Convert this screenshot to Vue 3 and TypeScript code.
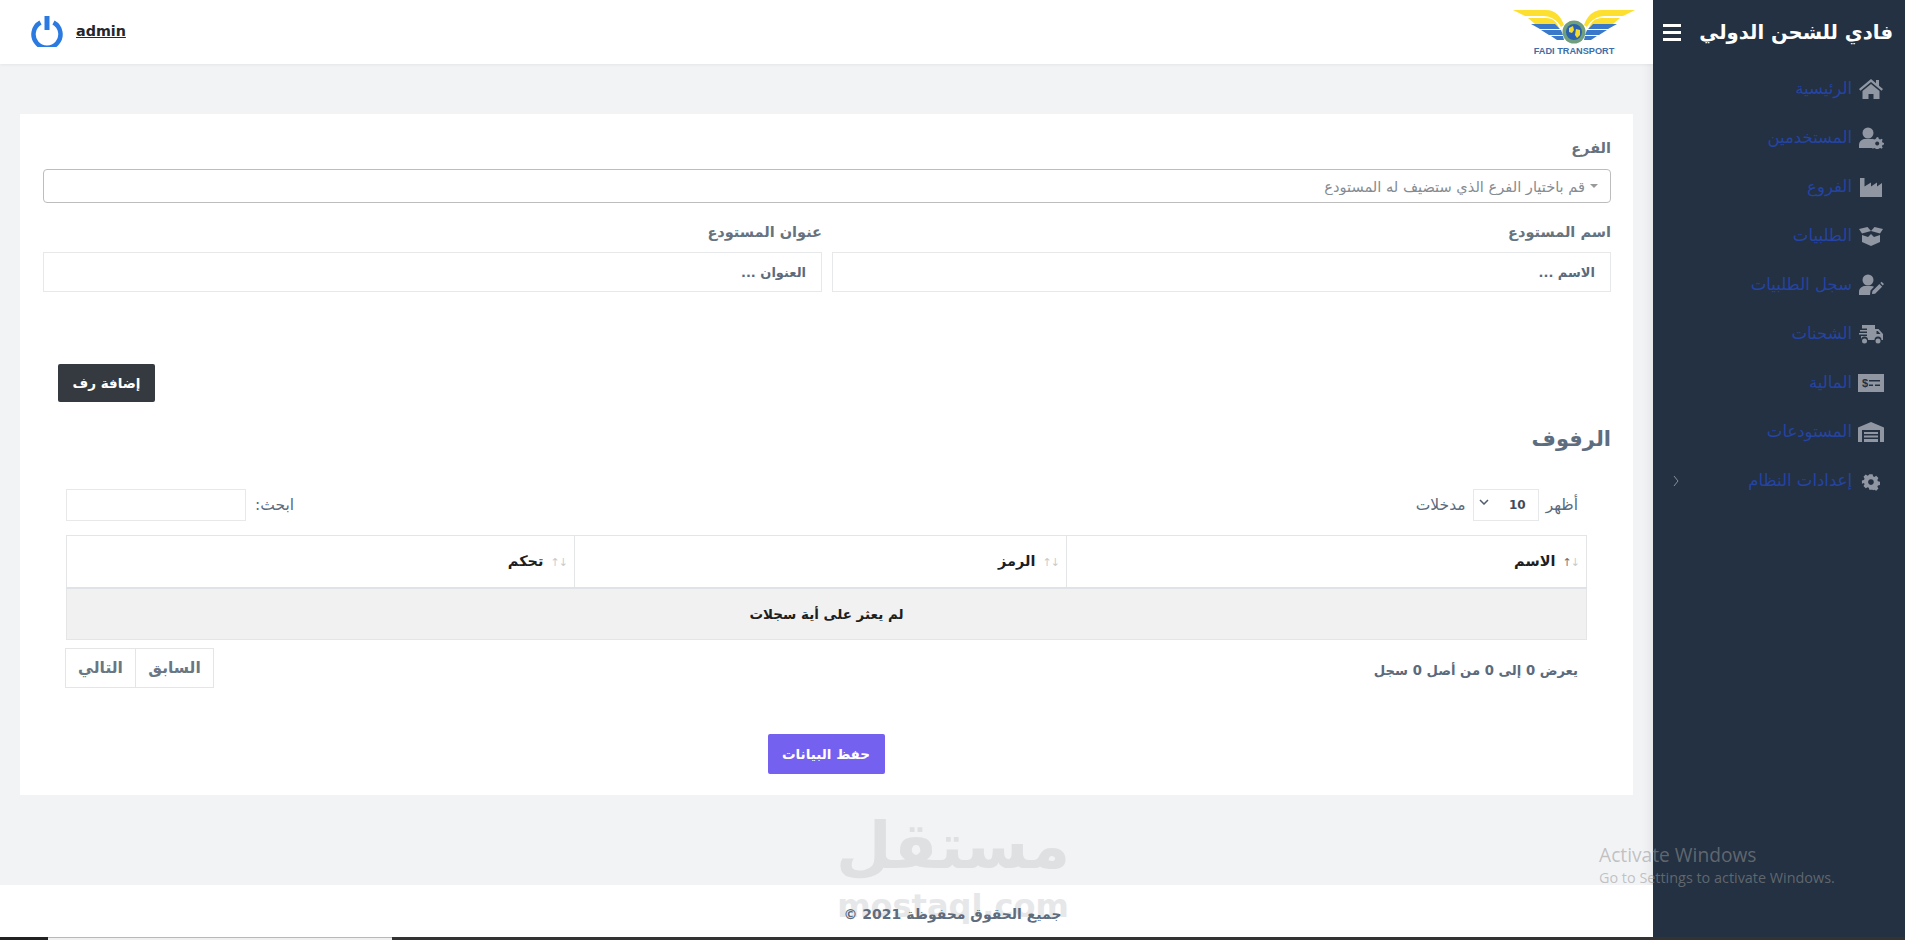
<script setup lang="ts">
import { ref } from 'vue'

const search = ref('')
const perPage = ref('10')
const branch = ref('')
const whName = ref('')
const whAddress = ref('')

const menu = [
  { label: 'الرئيسية', icon: 'home' },
  { label: 'المستخدمين', icon: 'usercog' },
  { label: 'الفروع', icon: 'industry' },
  { label: 'الطلبيات', icon: 'box' },
  { label: 'سجل الطلبيات', icon: 'useredit' },
  { label: 'الشحنات', icon: 'truck' },
  { label: 'المالية', icon: 'money' },
  { label: 'المستودعات', icon: 'warehouse' },
  { label: 'إعدادات النظام', icon: 'cog' },
]

const columns = [
  { label: 'الاسم', cls: 'col-name', sorted: true },
  { label: 'الرمز', cls: 'col-code', sorted: false },
  { label: 'تحكم', cls: 'col-ctrl', sorted: false },
]
</script>

<template>
  <div class="page" dir="rtl">
    <aside class="sidebar">
      <div class="brand">
        <span class="brand-name">فادي للشحن الدولي</span>
        <span class="burger"><i></i><i></i><i></i></span>
      </div>
      <nav class="menu">
        <a v-for="item in menu" :key="item.label" class="menu-item">
          <svg class="menu-icon" viewBox="0 0 26 22" fill="currentColor">
            <template v-if="item.icon === 'home'">
              <path d="M13 1 1 11l1.400 1.700L13 4l10.600 8.700L25 11l-4-3.300V2h-3v3.200z" />
              <path d="M13 6 4.500 13v8h6v-5h5v5h6v-8z" />
            </template>
            <template v-else-if="item.icon === 'usercog'">
              <circle cx="10" cy="6" r="5.500" />
              <path d="M1 21v-3c0-3.500 3-6 6-6h6c1 0 1.500.2 2 .4V21z" />
              <path fill-rule="evenodd" d="M19 10l1.500.4.300 1.500 1.500.6 1.300-.8 1.100 1.100-.8 1.300.6 1.400 1.500.4v1.600l-1.500.4-.6 1.400.8 1.300-1.100 1.100-1.300-.8-1.500.6-.3 1.100h-2.600l-.3-1.100-1.500-.6-1.300.8-1.100-1.100.8-1.300-.6-1.400-1.500-.4v-1.600l1.500-.4.600-1.400-.8-1.300 1.100-1.100 1.300.8 1.500-.6zM19.200 14.500a2 2 0 1 0 .01 0z" />
            </template>
            <template v-else-if="item.icon === 'industry'">
              <path d="M2 2h4.500v8.500L13 6.500v4l6-4v4l5-3.500V21H2z" />
            </template>
            <template v-else-if="item.icon === 'box'">
              <path d="M13 6 9.500 2 1 4l3 4.500zM13 6l3.500-4L25 4l-3 4.500z" />
              <path d="M4 10v7l9 4V9l-3 3zM22 10v7l-9 4V9l3 3z" />
            </template>
            <template v-else-if="item.icon === 'useredit'">
              <circle cx="10" cy="6" r="5.500" />
              <path d="M1 21v-3c0-3.500 3-6 6-6h6c1.200 0 2 .3 3 .8L12.500 16.500 12 21z" />
              <path d="M14 20l.4-3 7-7 2.700 2.700-7 7zM22.300 9l1.300-1.300 2.400 2.400-1.300 1.300z" />
            </template>
            <template v-else-if="item.icon === 'truck'">
              <path fill-rule="evenodd" d="M4 2h13v4h3.500l4.500 5v6h-1.500a3.500 3.500 0 0 0-7 0H10a3.500 3.500 0 0 0-7 0V13h6v-1.500H1V10h8V8.500H2V7h7V5.500H4zM18.500 8v3h4l-2.700-3z" />
              <circle cx="6.500" cy="18" r="2.500" />
              <circle cx="20" cy="18" r="2.500" />
            </template>
            <template v-else-if="item.icon === 'money'">
              <path fill-rule="evenodd" d="M0 2h26v18H0zM11 8v1.500h11V8zM11 12.500V14h4v-1.500zM17 12.500V14h5v-1.500z" />
              <text x="4" y="15" font-size="11" font-weight="700" font-family="'Liberation Sans', sans-serif" fill="#233142" direction="ltr">$</text>
            </template>
            <template v-else-if="item.icon === 'warehouse'">
              <path fill-rule="evenodd" d="M13 1 26 6.500V21h-4V9H4v12H0V6.500z" />
              <path d="M6 11h14v2H6zM6 14.500h14v2H6zM6 18h14v3H6z" />
            </template>
            <template v-else>
              <path fill-rule="evenodd" d="M11 3h4l.6 2.500 1.500.7 2.300-1.300 2.700 2.700-1.300 2.300.7 1.500 2.500.6v4l-2.500.6-.7 1.500 1.300 2.300-2.700 2.700-2.300-1.300-1.500.7L15 22h-4l-.6-2.500-1.500-.7-2.300 1.300-2.700-2.700 1.300-2.300-.7-1.500L2 14.500v-4l2.500-.6.700-1.500-1.300-2.300 2.700-2.700 2.300 1.300 1.500-.7zM13 9a3.500 3.500 0 1 0 .01 0z" transform="translate(2.300 1.800) scale(.82)" />
            </template>
          </svg>
          <span>{{ item.label }}</span>
          <svg v-if="item.icon === 'cog'" class="chevron" viewBox="0 0 6 12" fill="none" stroke="currentColor">
            <path d="M1 1l4 5-4 5" />
          </svg>
        </a>
      </nav>
    </aside>

    <div class="main">
      <header class="topbar">
        <svg class="logo" viewBox="0 0 122 46">
          <path d="M0 1h33c10 0 15 7 18 15l-3 2C44 11 38 7 30 7H12z" fill="#fde02f" />
          <path d="M122 1H89c-10 0-15 7-18 15l3 2c4-7 10-11 18-11h18z" fill="#fde02f" />
          <path d="M15 9h18c7 0 11 4 13 10l-3 1c-3-3-7-5-12-5H22z" fill="#fde02f" />
          <path d="M107 9H89c-7 0-11 4-13 10l3 1c3-3 7-5 12-5h9z" fill="#fde02f" />
          <path d="M18 15h24l5 5H27zM28 21h20l2 5H36zM38 27h12l1 4h-7z" fill="#3a78c9" />
          <path d="M104 15H80l-5 5h20zM94 21H74l-2 5h14zM84 27H72l-1 4h7z" fill="#3a78c9" />
          <circle cx="61" cy="23" r="11.500" fill="#6f9f7c" />
          <circle cx="61" cy="23" r="8" fill="#2a62b0" />
          <path d="M56 19l4-2 1 4-2 3-3-1zM63 20l4 1 0 5-3 3-2-3z" fill="#f5d92b" />
          <text x="61" y="45" text-anchor="middle" direction="ltr" class="logo-text">FADI TRANSPORT</text>
        </svg>
        <div class="user">
          <a class="user-name">admin</a>
          <svg class="power" viewBox="0 0 32 32" fill="none" stroke="#2a7ae2" stroke-width="4.500">
            <path d="M9.500 7.500a13.500 13.500 0 1 0 13 0" />
            <path d="M16 1v14" stroke-width="5" />
          </svg>
        </div>
      </header>

      <div class="content">
        <section class="card">
          <div class="field">
            <label>الفرع</label>
            <div class="picker">
              <span class="caret"></span>
              <input v-model="branch" class="picker-input" placeholder="قم باختيار الفرع الذي ستضيف له المستودع" />
            </div>
          </div>
          <div class="field-row">
            <div class="field">
              <label>اسم المستودع</label>
              <input v-model="whName" class="text-input" placeholder="الاسم ..." />
            </div>
            <div class="field">
              <label>عنوان المستودع</label>
              <input v-model="whAddress" class="text-input" placeholder="العنوان ..." />
            </div>
          </div>

          <div class="add-row">
            <button class="btn-dark">إضافة رف</button>
          </div>

          <h2 class="section-title">الرفوف</h2>

          <div class="table-wrap">
            <div class="table-tools">
              <div class="length">
                <span>أظهر</span>
                <span class="length-select">
                  <span>{{ perPage }}</span>
                  <svg viewBox="0 0 10 6" fill="none" stroke="#4f5d6e" stroke-width="1.500"><path d="M1 1l4 4 4-4" /></svg>
                </span>
                <span>مدخلات</span>
              </div>
              <div class="search">
                <span>ابحث:</span>
                <input v-model="search" class="search-input" />
              </div>
            </div>

            <table class="grid">
              <thead>
                <tr>
                  <th v-for="col in columns" :key="col.label" :class="col.cls">
                    <span class="sort" :class="{ on: col.sorted }"><i>↑</i><i>↓</i></span>
                    {{ col.label }}
                  </th>
                </tr>
              </thead>
              <tbody>
                <tr>
                  <td colspan="3">لم يعثر على أية سجلات</td>
                </tr>
              </tbody>
            </table>

            <div class="table-foot">
              <span class="info">يعرض 0 إلى 0 من أصل 0 سجل</span>
              <div class="pager">
                <a>السابق</a>
                <a>التالي</a>
              </div>
            </div>
          </div>

          <div class="save-row">
            <button class="btn-save">حفظ البيانات</button>
          </div>
        </section>
      </div>

      <footer class="footer"><span class="copy">جميع الحقوق محفوظة 2021 ©</span></footer>
    </div>

    <div class="watermark">
      <span class="wm-ar">مستقل</span>
      <span class="wm-en">mostaql.com</span>
    </div>

    <div class="activate" dir="ltr">
      <div class="activate-title">Activate Windows</div>
      <div class="activate-sub">Go to Settings to activate Windows.</div>
    </div>

    <div class="taskbar" dir="ltr">
      <span class="tb-a"></span>
      <span class="tb-b"></span>
      <span class="tb-c"></span>
    </div>
  </div>
</template>

<style>
html,
body {
  margin: 0;
  overflow: hidden;
}
</style>

<style scoped>
.page {
  position: relative;
  display: flex;
  width: 1905px;
  height: 940px;
  overflow: hidden;
  background: #f2f3f5;
  font-family: "DejaVu Sans", "Noto Sans", sans-serif;
  color: #5b6a7c;
}

/* sidebar */
.sidebar {
  flex: 0 0 252px;
  height: 937px;
  background: #233142;
  box-shadow: 0 0 12px rgba(0, 0, 0, 0.1);
}
.brand {
  display: flex;
  align-items: center;
  justify-content: space-between;
  height: 64px;
  padding: 0 12px 0 0;
}
.brand-name {
  color: #fff;
  font-size: 19.600px;
  font-weight: 700;
}
.burger {
  display: flex;
  flex-direction: column;
  gap: 4px;
  width: 18px;
  padding-left: 10px;
}
.burger i {
  display: block;
  height: 3px;
  background: #fff;
}
.menu {
  display: flex;
  flex-direction: column;
}
.menu-item {
  display: flex;
  align-items: center;
  gap: 6px;
  height: 49px;
  padding-right: 21px;
  color: #2544a3;
  font-size: 16.500px;
}
.menu-icon {
  flex: 0 0 26px;
  height: 22px;
  color: #9097a3;
}
.chevron {
  flex: 0 0 6px;
  height: 12px;
  margin-right: auto;
  margin-left: 20px;
  color: #8a8f98;
}

/* main column */
.main {
  flex: 0 0 1653px;
  display: flex;
  flex-direction: column;
  height: 937px;
}
.topbar {
  display: flex;
  align-items: center;
  justify-content: space-between;
  flex: 0 0 64px;
  padding: 0 18px 0 31px;
  background: #fff;
  box-shadow: 0 1px 3px rgba(0, 0, 0, 0.06);
}
.logo {
  width: 122px;
  height: 46px;
}
.logo-text {
  fill: #3e6da8;
  font-family: "Liberation Sans", sans-serif;
  font-size: 9.200px;
  font-weight: 700;
}
.user {
  display: flex;
  align-items: center;
  gap: 13px;
  margin-bottom: 2px;
}
.user-name {
  color: #24272c;
  font-size: 14.300px;
  font-weight: 700;
  text-decoration: underline;
}
.power {
  width: 32px;
  height: 32px;
}
.content {
  flex: 1;
  padding: 50px 20px 0;
}
.card {
  height: 681px;
  box-sizing: border-box;
  padding: 22px 22px 0 23px;
  background: #fff;
}

/* form */
.field {
  display: flex;
  flex-direction: column;
  flex: 1;
}
.field label {
  height: 33px;
  color: #66737f;
  font-size: 14.500px;
  font-weight: 700;
  line-height: 24px;
}
.picker {
  display: flex;
  align-items: center;
  gap: 5px;
  height: 34px;
  box-sizing: border-box;
  padding: 0 12px 0 8px;
  border: 1px solid #bdbdbd;
  border-radius: 4px;
}
.caret {
  width: 0;
  height: 0;
  border: 4px solid transparent;
  border-top-color: #999;
  border-bottom: 0;
}
.picker-input {
  flex: 1;
  border: 0;
  outline: 0;
  padding: 0;
  font: 14.600px "DejaVu Sans", sans-serif;
}
.picker-input::placeholder {
  color: #868b92;
  opacity: 1;
}
.field-row {
  display: flex;
  gap: 10px;
  margin-top: 17px;
}
.field-row label {
  height: 32px;
}
.text-input {
  height: 40px;
  box-sizing: border-box;
  padding: 0 15px;
  border: 1px solid #e6e8ea;
  outline: 0;
  font: 700 13px "DejaVu Sans", sans-serif;
}
.text-input::placeholder {
  color: #5b6a7c;
  opacity: 1;
}
.add-row {
  display: flex;
  justify-content: flex-end;
  margin-top: 72px;
  padding-left: 15px;
}
.btn-dark {
  width: 97px;
  height: 38px;
  border: 0;
  border-radius: 2px;
  background: #343a40;
  color: #fff;
  font: 700 13.500px "DejaVu Sans", sans-serif;
}
.section-title {
  margin: 17px 0 0;
  height: 40px;
  color: #5d6d80;
  font-size: 21px;
  font-weight: 700;
  line-height: 40px;
}
.table-wrap {
  padding: 0 24px 0 23px;
}

/* table */
.table-tools {
  display: flex;
  justify-content: space-between;
  margin-top: 30px;
  padding-right: 9px;
  font-size: 15.500px;
}
.length,
.search {
  display: flex;
  align-items: center;
  gap: 7px;
}
.search {
  gap: 9px;
}
.length-select {
  display: flex;
  align-items: center;
  justify-content: space-between;
  width: 66px;
  height: 32px;
  box-sizing: border-box;
  padding: 0 12px 0 5px;
  border: 1px solid #e6e8ea;
  color: #3f4c5c;
  font-size: 12px;
  font-weight: 700;
}
.length-select svg {
  width: 10px;
  height: 6px;
  margin-bottom: 6px;
}
.search-input {
  width: 180px;
  height: 32px;
  box-sizing: border-box;
  border: 1px solid #e6e8ea;
  outline: 0;
}
.grid {
  width: 1521px;
  margin-top: 14px;
  border-collapse: collapse;
  table-layout: fixed;
}
.grid th {
  box-sizing: border-box;
  height: 52px;
  padding: 0 7px;
  border: 1px solid #e3e5e7;
  border-bottom: 2px solid #dfe3e8;
  color: #1d1f22;
  font-size: 14.500px;
  font-weight: 700;
  text-align: right;
}
.col-name {
  width: 520px;
}
.col-code {
  width: 492px;
}
.sort {
  display: inline-block;
  margin-left: 2px;
  color: #c9cbce;
  direction: ltr;
  font-size: 11px;
  font-weight: 400;
  letter-spacing: -1px;
}
.sort i {
  font-style: normal;
}
.sort.on i:first-child {
  color: #6b7280;
}
.grid td {
  height: 50px;
  padding: 0;
  border: 1px solid #e3e5e7;
  background: #f1f1f1;
  color: #1d1f22;
  font-size: 13.500px;
  font-weight: 700;
  text-align: center;
}
.table-foot {
  display: flex;
  align-items: flex-start;
  justify-content: space-between;
  margin-top: 8px;
  padding-right: 9px;
}
.info {
  margin-top: 15px;
  font-size: 13.200px;
  font-weight: 700;
}
.pager {
  display: flex;
  margin-left: -1px;
}
.pager a {
  display: flex;
  align-items: center;
  justify-content: center;
  height: 40px;
  box-sizing: border-box;
  border: 1px solid #e3e5e7;
  color: #6a7684;
  font-size: 15.500px;
  font-weight: 700;
}
.pager a:first-child {
  width: 79px;
}
.pager a:last-child {
  width: 71px;
  margin-right: -1px;
}
.save-row {
  display: flex;
  justify-content: center;
  margin-top: 46px;
  padding-right: 2px;
}
.btn-save {
  width: 117px;
  height: 40px;
  border: 0;
  border-radius: 2px;
  background: #7561f0;
  color: #fff;
  font: 700 13.500px "DejaVu Sans", sans-serif;
}

/* footer */
.footer {
  flex: 0 0 52px;
  box-sizing: border-box;
  padding: 17px 0 0 252px;
  background: #fff;
  color: #5e6c7d;
  font-size: 14px;
  font-weight: 700;
  line-height: 24px;
  text-align: center;
}
.copy {
  position: relative;
  z-index: 1;
}

/* overlays */
.watermark {
  position: absolute;
  left: 838px;
  top: 804px;
  width: 230px;
  display: flex;
  flex-direction: column;
  align-items: center;
  pointer-events: none;
}
.wm-ar {
  color: #dfe0e2;
  font-size: 64px;
  font-weight: 700;
  line-height: 84px;
}
.wm-en {
  margin-top: 2px;
  color: #e6e7e9;
  font-size: 32px;
  font-weight: 700;
  line-height: 32px;
}
.activate {
  position: absolute;
  left: 1599px;
  top: 843px;
  color: rgba(150, 150, 150, 0.55);
  font-family: "Open Sans", sans-serif;
  pointer-events: none;
}
.activate-title {
  font-size: 19.200px;
  line-height: 24px;
}
.activate-sub {
  font-size: 14.400px;
  line-height: 22px;
}
.taskbar {
  position: absolute;
  left: 0;
  bottom: 0;
  display: flex;
  width: 100%;
  height: 3px;
}
.tb-a {
  width: 48px;
  background: #222;
}
.tb-b {
  width: 344px;
  background: #f0f0f0;
  border-top: 1px solid #b8b8b8;
  box-sizing: border-box;
}
.tb-c {
  flex: 1;
  background: #333;
}
</style>
